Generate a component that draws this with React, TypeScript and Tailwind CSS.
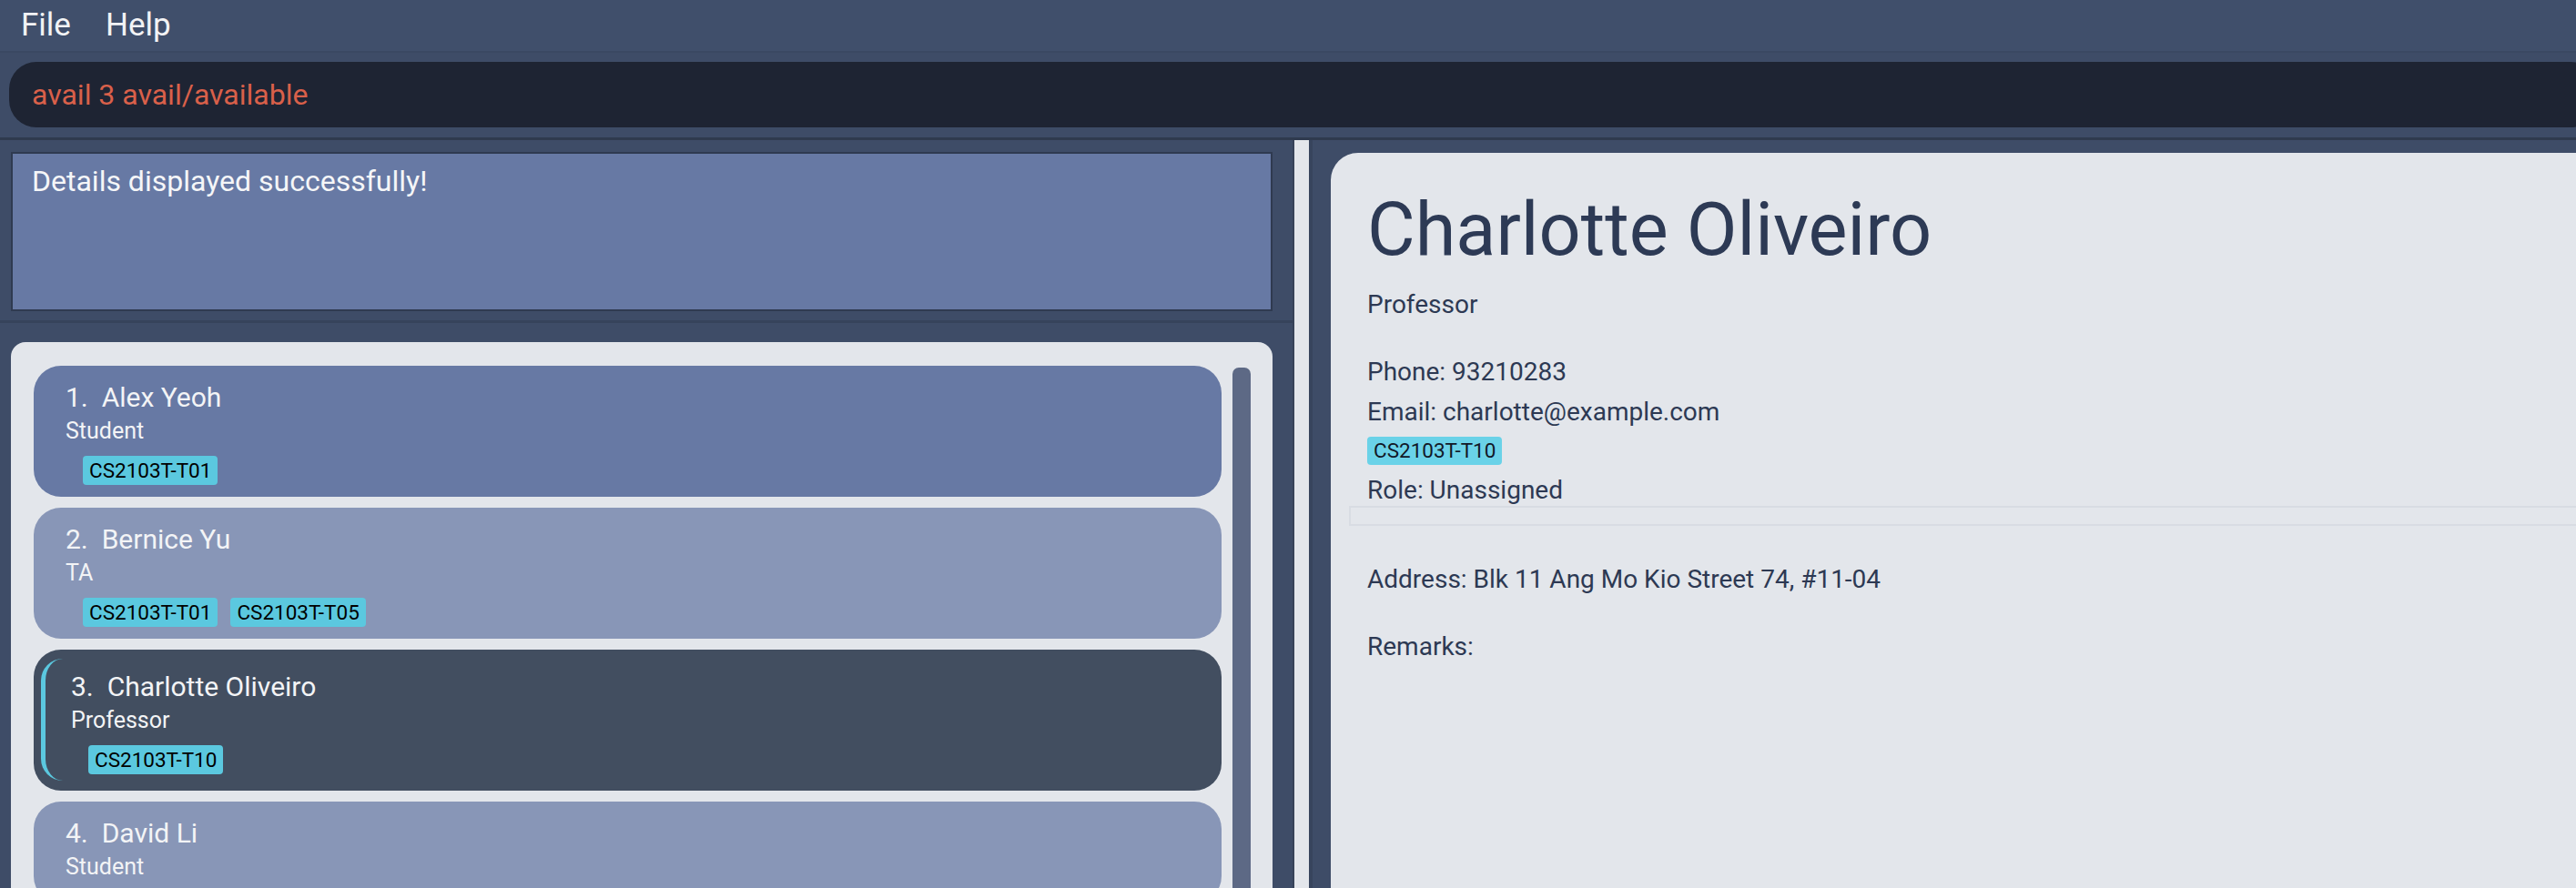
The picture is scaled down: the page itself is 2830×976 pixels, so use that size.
import React from 'react';

interface Person {
  index: number;
  name: string;
  role: string;
  tags: string[];
}

const PEOPLE: Person[] = [
  { index: 1, name: 'Alex Yeoh', role: 'Student', tags: ['CS2103T-T01'] },
  { index: 2, name: 'Bernice Yu', role: 'TA', tags: ['CS2103T-T01', 'CS2103T-T05'] },
  { index: 3, name: 'Charlotte Oliveiro', role: 'Professor', tags: ['CS2103T-T10'] },
  { index: 4, name: 'David Li', role: 'Student', tags: [] },
];

const SELECTED = 3;

function Tag({ label }: { label: string }) {
  return (
    <span className="h-[32px] px-[7px] flex items-center rounded-[4px] bg-[#5bc8df] text-[22.5px] text-black leading-none">
      {label}
    </span>
  );
}

function CardBody({ p }: { p: Person }) {
  return (
    <>
      <div className="text-[30px] leading-[36px] text-[#f3f4f6] whitespace-pre">
        {`${p.index}.  ${p.name}`}
      </div>
      <div className="mt-[4px] text-[25px] leading-[30px] text-[#f3f4f6]">{p.role}</div>
      <div className="mt-[12px] ml-[19px] flex gap-[14px]">
        {p.tags.map((t) => (
          <Tag key={t} label={t} />
        ))}
      </div>
    </>
  );
}

function PersonCard({ p }: { p: Person }) {
  if (p.index === SELECTED) {
    return (
      <div className="rounded-[30px] bg-[#424e60] pl-[8px] pt-[10px] pb-[11px]">
        <div className="border-l-[5px] border-[#5bc8df] rounded-l-[24px] pl-[28px] pt-[13px] pb-[7px]">
          <CardBody p={p} />
        </div>
      </div>
    );
  }
  const bg = p.index % 2 === 1 ? 'bg-[#6779a4]' : 'bg-[#8896b7]';
  return (
    <div className={`rounded-[30px] ${bg} pl-[35px] pt-[17px] pb-[13px]`}>
      <CardBody p={p} />
    </div>
  );
}

export default function App() {
  return (
    <div className="w-[2830px] h-[976px] overflow-hidden bg-[#3e4c67] flex flex-col font-['Roboto',sans-serif]">
      {/* Menu bar */}
      <div className="h-[56px] shrink-0 bg-[#404f6b] flex items-center gap-[38px] px-[23px] text-[35px] text-[#f2f3f5]">
        <span>File</span>
        <span>Help</span>
      </div>
      <div className="h-[2px] shrink-0 bg-[#3a4862]" />

      {/* Command box */}
      <div className="shrink-0 pt-[10px] pb-[11px] pl-[10px] mr-[-24px]">
        <div className="h-[72px] rounded-[30px] bg-[#1e2433] flex items-center pl-[25px] text-[32px] text-[#d9604a]">
          avail 3 avail/available
        </div>
      </div>
      <div className="h-[3px] shrink-0 bg-[#2f3a4e]" />

      <div className="flex-1 flex min-h-0">
        {/* Left column */}
        <div className="w-[1420px] shrink-0 flex flex-col">
          <div className="pt-[13px] pl-[12px] pr-[22px] pb-[10px]">
            <div className="h-[175px] border-2 border-[#2f3a50] bg-[#6779a4] pl-[21px] pt-[11px] text-[32px] leading-[38px] text-[#f5f6f8]">
              Details displayed successfully!
            </div>
          </div>
          <div className="h-[3px] shrink-0 bg-[#36435b]" />
          <div className="flex-1 min-h-0 pt-[21px] pl-[12px] pr-[22px]">
            <div className="h-full rounded-t-[16px] bg-[#e3e6eb] flex gap-[12px] pl-[25px] pr-[24px] pt-[26px] overflow-hidden">
              <div className="flex-1 flex flex-col gap-[12px]">
                {PEOPLE.map((p) => (
                  <PersonCard key={p.index} p={p} />
                ))}
              </div>
              <div className="w-[20px] mt-[2px] rounded-t-[7px] bg-[#5d6985]" />
            </div>
          </div>
        </div>

        {/* Divider */}
        <div className="w-[2px] shrink-0 bg-[#374359]" />
        <div className="w-[16px] shrink-0 bg-[#e3e6eb]" />
        <div className="w-[4px] shrink-0 bg-[#37445d]" />

        {/* Detail panel */}
        <div className="flex-1 min-w-0 pl-[20px] pt-[14px]">
          <div className="h-full rounded-tl-[30px] bg-[#e3e6eb] pl-[40px] pt-[35px] text-[#2d3953] mr-[-20px]">
            <div className="text-[81px] leading-[100px] text-[#2d3a55]">Charlotte Oliveiro</div>
            <div className="mt-[15px] text-[28px] leading-[34px]">Professor</div>
            <div className="mt-[40px] text-[28px] leading-[34px]">Phone: 93210283</div>
            <div className="mt-[10px] text-[28px] leading-[34px]">Email: charlotte@example.com</div>
            <div className="mt-[10px] flex">
              <span className="h-[31px] px-[7px] flex items-center rounded-[4px] bg-[#6ad2e8] text-[22.5px] text-[#111827] leading-none">
                CS2103T-T10
              </span>
            </div>
            <div className="mt-[11px] text-[28px] leading-[34px]">Role: Unassigned</div>
            <div className="ml-[-20px] h-[22px] border-2 border-[#d8dce3]" />
            <div className="mt-[42px] text-[28px] leading-[34px]">Address: Blk 11 Ang Mo Kio Street 74, #11-04</div>
            <div className="mt-[40px] text-[28px] leading-[34px]">Remarks:</div>
          </div>
        </div>
      </div>
    </div>
  );
}
